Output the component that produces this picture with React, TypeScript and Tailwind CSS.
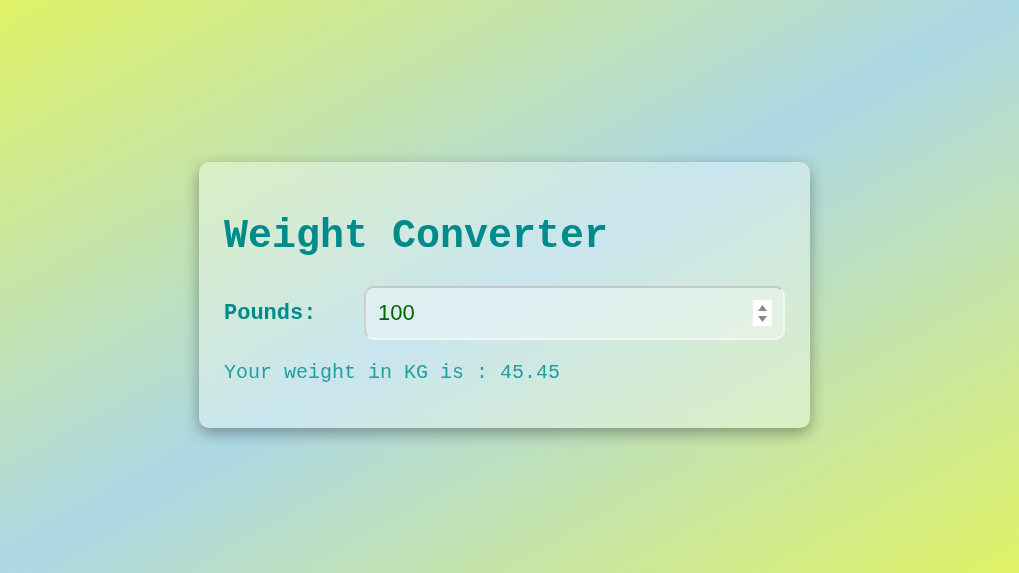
import React, { useState } from 'react'

function WeightConverter() {
  const [pounds, setPounds] = useState('100')
  const kg = pounds === '' ? '' : (parseFloat(pounds) / 2.2).toFixed(2)

  return (
    <div className="w-[611px] rounded-[10px] bg-white/35 backdrop-blur-sm px-[25px] pt-[25px] pb-[24px] shadow-[0_5px_15px_rgba(0,0,0,0.35)]">
      <h1 className="my-[27px] text-[40px] font-bold leading-[45px] text-[#008b8b] font-['Courier_New','Liberation_Mono',monospace]">
        Weight Converter
      </h1>

      {/* input row */}
      <div className="flex items-center">
        <label
          htmlFor="lbs"
          className="w-[140px] shrink-0 text-[22px] font-bold text-[#008b8b] font-['Courier_New','Liberation_Mono',monospace]"
        >
          Pounds:
        </label>
        <div className="relative flex-1">
          <input
            id="lbs"
            type="text"
            autoFocus
            value={pounds}
            onChange={(e) => setPounds(e.target.value)}
            className="h-[54px] w-full rounded-[10px] border-2 border-t-[#c6c8c6] border-l-[#cbd0cb] border-b-[#f4f8f4] border-r-[#f4f8f4] bg-white/35 pl-[12px] pr-10 text-[22px] text-[#006400] caret-[#006400] outline-none font-['Liberation_Sans',Arial,sans-serif]"
          />
          <div className="absolute right-[13px] top-[14px] flex h-[26px] w-[19px] flex-col items-center justify-center gap-[5px] bg-white">
            <svg width="9" height="6" viewBox="0 0 9 6">
              <path d="M4.5 0 L9 6 L0 6 Z" fill="#8a8a8a" />
            </svg>
            <svg width="9" height="6" viewBox="0 0 9 6">
              <path d="M0 0 L9 0 L4.5 6 Z" fill="#8a8a8a" />
            </svg>
          </div>
        </div>
      </div>

      <p className="mt-[21px] mb-[20px] text-[20px] leading-[23px] text-[#20a0a0] font-['Courier_New','Liberation_Mono',monospace]">
        Your weight in KG is : {kg}
      </p>
    </div>
  )
}

export default function App() {
  return (
    <div className="flex min-h-screen items-center justify-center pr-[10px] pt-[17px] bg-[linear-gradient(to_bottom_right,#e0f266,#add8e6_50%,#e0f266)]">
      <WeightConverter />
    </div>
  )
}
